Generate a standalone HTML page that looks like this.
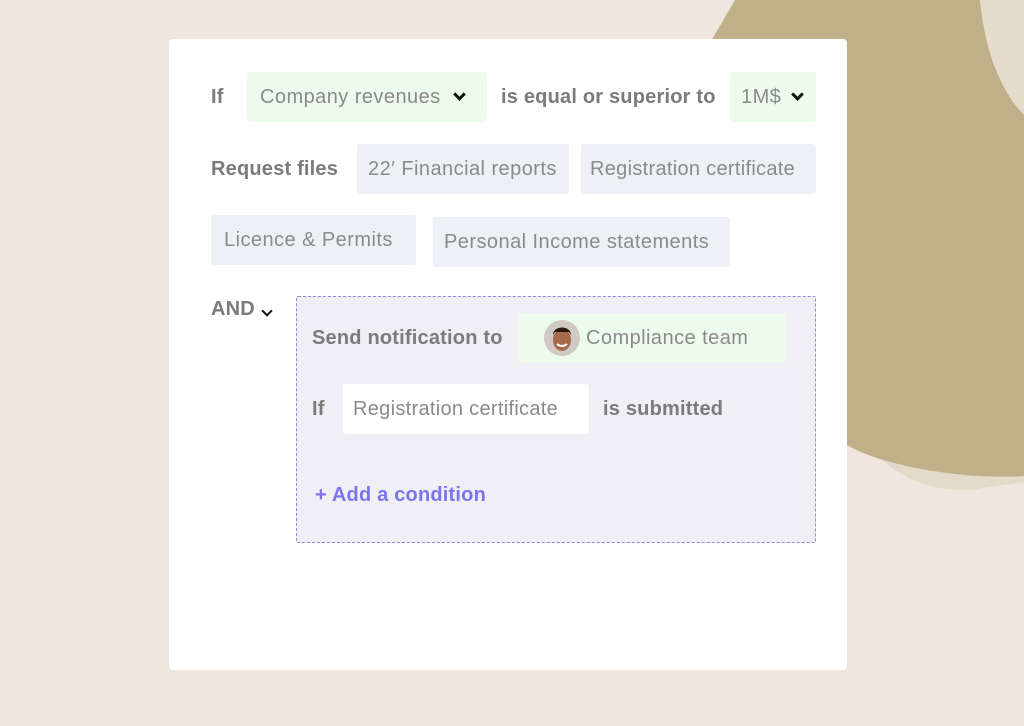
<!DOCTYPE html>
<html><head><style>
*{margin:0;padding:0;box-sizing:border-box}
body{width:1024px;height:726px;background:#efe7df;position:relative;overflow:hidden;font-family:"Liberation Sans",sans-serif}
svg.bg{position:absolute;left:0;top:0}
.card{position:absolute;left:169px;top:39px;width:678px;height:631px;background:#fff;border-radius:4px}
.a{position:absolute;font-size:20px;white-space:nowrap;top:0}
.b{font-weight:bold;color:#7b7b7b;letter-spacing:0.2px}
.chip{position:absolute;height:50px;border-radius:3px;font-size:20px;letter-spacing:0.45px;color:#8a8a8a;display:flex;align-items:center;padding-left:13px;white-space:nowrap}
.g{background:#edfbed}
.s{background:#edf0f5}
.box{position:absolute;left:296px;top:296px;width:520px;height:247px;background:#efeff5;border:1.5px dashed #8f87e0;border-radius:2px}
.chev{display:inline-block;width:9px;height:9px;border-right:3px solid #111;border-bottom:3px solid #111;transform:rotate(45deg);margin-left:14px;margin-top:-6px}
</style></head><body>
<svg class="bg" width="1024" height="726">
<path d="M847,420 C880,470 920,492 970,490 L1024,482 L1024,440 Z" fill="#e3dac9"/>
<path d="M735,0 L980,0 C985,50 1000,90 1024,115 L1024,476 C960,480 880,465 847,445 L700,60 Z" fill="#bfb08a"/>
<path d="M980,0 C985,50 1000,90 1024,115 L1024,0 Z" fill="#e5dccb"/>
</svg>
<div class="card"></div>
<div class="a b" style="left:211px;top:86px">If</div>
<div class="chip g" style="left:247px;top:72px;width:240px">Company revenues<span class="chev"></span></div>
<div class="a b" style="left:501px;top:86px">is equal or superior to</div>
<div class="chip g" style="left:730px;top:72px;width:86px;padding-left:11px">1M$<span class="chev" style="margin-left:12px"></span></div>
<div class="a b" style="left:211px;top:158px">Request files</div>
<div class="chip s" style="left:357px;top:144px;width:212px;padding-left:11px">22′ Financial reports</div>
<div class="chip s" style="left:581px;top:144px;width:235px;padding-left:9px;letter-spacing:0.3px">Registration certificate</div>
<div class="chip s" style="left:211px;top:215px;width:205px">Licence &amp; Permits</div>
<div class="chip s" style="left:433px;top:217px;width:297px;padding-left:11px">Personal Income statements</div>
<div class="a b" style="left:211px;top:298px">AND<span class="chev" style="margin-left:8px;width:8px;height:8px;border-width:2.6px"></span></div>
<div class="box"></div>
<div class="a b" style="left:312px;top:327px">Send notification to</div>
<div class="chip g" style="left:518px;top:313px;width:268px;padding-left:26px"><svg width="36" height="36" style="margin-right:6px"><circle cx="18" cy="18" r="18" fill="#cfcac4"/><ellipse cx="18" cy="20" rx="9" ry="11" fill="#a8684a"/><path d="M9,15 C9,5 27,5 27,15 L25,12 L11,12 Z" fill="#2a1a12"/><path d="M13,24 Q18,28 23,24" stroke="#fff" stroke-width="2" fill="none"/></svg>Compliance team</div>
<div class="a b" style="left:312px;top:398px">If</div>
<div class="chip" style="left:343px;top:384px;width:246px;background:#fff;padding-left:10px;letter-spacing:0.3px">Registration certificate</div>
<div class="a b" style="left:603px;top:398px">is submitted</div>
<div class="a" style="left:315px;top:484px;font-weight:bold;color:#7c74ee;letter-spacing:0.2px">+ Add a condition</div>
</body></html>
